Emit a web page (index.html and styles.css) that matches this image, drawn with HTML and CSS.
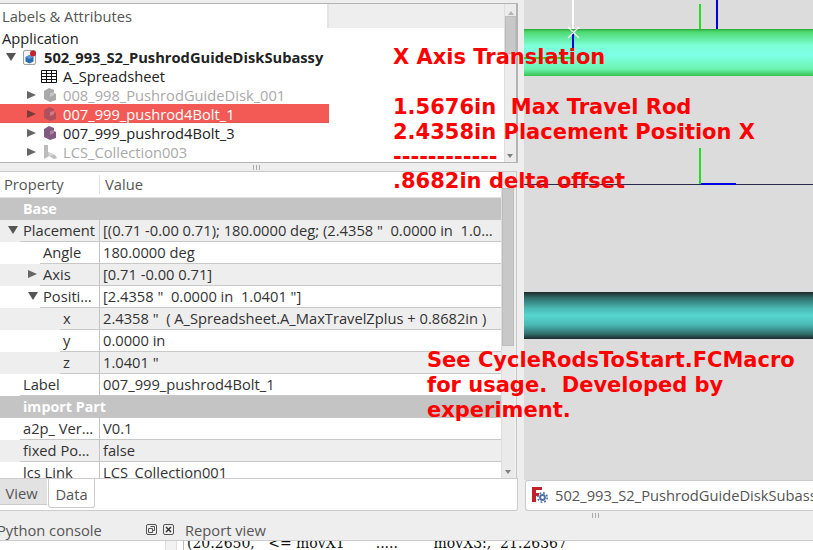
FILE: index.html
```html
<!DOCTYPE html>
<html lang="en">
<head>
<meta charset="utf-8">
<title>FreeCAD</title>
<link rel="stylesheet" href="styles.css">
</head>
<body>
<div class="app">
  <div class="top">
    <aside class="left-pane">
      <section class="tree-frame">
        <div class="tree-main">
          <div class="tree-head"><div class="tree-head-cell">Labels &amp; Attributes</div></div>
          <div class="tree-body">
            <div class="trow"><span class="tlabel">Application</span></div>
            <div class="trow l1">
              <span class="arrow a-down"></span>
              <svg class="ico" viewBox="0 0 16 16"><rect x="1.500" y="1.500" width="12" height="14" rx="1.500" fill="#f6f6f6" stroke="#a0a0a0"/><path d="M3.500 8l4-2 4 2v4.500l-4 2-4-2z" fill="#2c6cb0"/><path d="M3.500 8l4 2 4-2-4-2z" fill="#5a98d6"/><circle cx="11" cy="4.500" r="3" fill="#c6202c"/></svg>
              <span class="tlabel bold">502_993_S2_PushrodGuideDiskSubassy</span>
            </div>
            <div class="trow l2">
              <svg class="ico" viewBox="0 0 16 16"><path d="M.5 2.500h15v12H.5zM.5 5.500h15M.5 8.500h15M.5 11.500h15M5.500 2.500v12M10.500 2.500v12" fill="none" stroke="#111"/></svg>
              <span class="tlabel">A_Spreadsheet</span>
            </div>
            <div class="trow l3 muted">
              <span class="arrow a-right"></span>
              <svg class="ico part" viewBox="0 0 14 16"><path d="M1 4l5-3 5 2v3l2 1v6l-6 2-6-3z" fill="#a9a9a9"/><path d="M7 6l4-1v3l2-1-6 3z" fill="#c6c6c6"/></svg>
              <span class="tlabel">008_998_PushrodGuideDisk_001</span>
            </div>
            <div class="trow l3 selected">
              <span class="arrow a-right"></span>
              <svg class="ico part" viewBox="0 0 14 16"><path d="M1 4l5-3 5 2v3l2 1v6l-6 2-6-3z" fill="#b0505e"/><path d="M7 6l4-1v3l2-1-6 3z" fill="#d37c86"/></svg>
              <span class="tlabel">007_999_pushrod4Bolt_1</span>
            </div>
            <div class="trow l3">
              <span class="arrow a-right"></span>
              <svg class="ico part" viewBox="0 0 14 16"><path d="M1 4l5-3 5 2v3l2 1v6l-6 2-6-3z" fill="#825a80"/><path d="M7 6l4-1v3l2-1-6 3z" fill="#a884a6"/></svg>
              <span class="tlabel">007_999_pushrod4Bolt_3</span>
            </div>
            <div class="trow l3 muted">
              <span class="arrow a-right"></span>
              <svg class="ico part" viewBox="0 0 16 16"><path d="M2 1h4v7l7 3 2 3-3 1-5-3-5 3z" fill="#bcbcbc"/><path d="M6 8l7 3-6 1z" fill="#d8d8d8"/></svg>
              <span class="tlabel">LCS_Collection003</span>
            </div>
          </div>
        </div>
        <div class="vbar"><span class="up"></span><span class="thumb tree-thumb"></span><span class="corner"></span></div>
      </section>
      <div class="hsplit"><span class="grip"></span></div>
      <section class="prop-frame">
        <div class="prop-main">
          <div class="prop-head"><div class="ph1">Property</div><div class="ph2">Value</div></div>
          <div class="prop-body">
            <div class="group">Base</div>
            <div class="prow alt"><div class="pname i1"><span class="arrow a-down pa"></span>Placement</div><div class="pval">[(0.71 -0.00 0.71); 180.0000 deg; (2.4358 "&nbsp; 0.0000 in&nbsp; 1.0…</div></div>
            <div class="prow"><div class="pname i2">Angle</div><div class="pval">180.0000 deg</div></div>
            <div class="prow alt"><div class="pname i2"><span class="arrow a-right pa"></span>Axis</div><div class="pval">[0.71 -0.00 0.71]</div></div>
            <div class="prow"><div class="pname i2"><span class="arrow a-down pa"></span>Positi…</div><div class="pval">[2.4358 "&nbsp; 0.0000 in&nbsp; 1.0401 "]</div></div>
            <div class="prow alt"><div class="pname i3">x</div><div class="pval">2.4358 "&nbsp; ( A_Spreadsheet.A_MaxTravelZplus + 0.8682in )</div></div>
            <div class="prow"><div class="pname i3">y</div><div class="pval">0.0000 in</div></div>
            <div class="prow alt"><div class="pname i3">z</div><div class="pval">1.0401 "</div></div>
            <div class="prow"><div class="pname i1">Label</div><div class="pval">007_999_pushrod4Bolt_1</div></div>
            <div class="group">import Part</div>
            <div class="prow"><div class="pname i1">a2p_ Ver…</div><div class="pval">V0.1</div></div>
            <div class="prow alt"><div class="pname i1">fixed Po…</div><div class="pval">false</div></div>
            <div class="prow"><div class="pname i1">lcs Link</div><div class="pval">LCS_Collection001</div></div>
          </div>
        </div>
        <div class="vbar pbar"><span class="thumb prop-thumb"></span><span class="corner"></span></div>
      </section>
      <div class="tabs">
        <div class="tab">View</div>
        <div class="tab active">Data</div>
      </div>
    </aside>
    <main class="right-pane">
      <div class="viewport">
        <span class="axis green a1"></span><span class="axis blue a2"></span><span class="axis white a3"></span><span class="axis blue a4"></span>
        <span class="rod rod-green"></span>
        <span class="hline green h1"></span>
        <span class="baseline"></span>
        <span class="axis green a5"></span><span class="hline blue h2"></span>
        <span class="rod rod-teal"></span>
        <svg class="cross" viewBox="0 0 13 13"><path d="M1 1l11 11M12 1L1 12" stroke="#fff" stroke-width="1.200"/></svg>
      </div>
      <div class="doc-tabs">
        <div class="doc-tab">
          <svg class="fc" viewBox="0 0 16 16"><path d="M0 0h10v3H4v3h3v3H4v6H0z" fill="#c4202a"/><circle cx="10.500" cy="10.500" r="3.400" fill="#4a70a8"/><circle cx="10.500" cy="10.500" r="4.700" fill="none" stroke="#4a70a8" stroke-width="1.600" stroke-dasharray="1.800 1.900"/><circle cx="10.500" cy="10.500" r="1.400" fill="#fff"/></svg>
          <span>502_993_S2_PushrodGuideDiskSubassy</span>
        </div>
      </div>
      <div class="hsplit low"><span class="grip"></span></div>
    </main>
  </div>
  <div class="dock">
    <span class="dock-title">Python console</span>
    <svg class="dock-btn" viewBox="0 0 11 11"><rect x=".5" y=".5" width="10" height="10" rx="1.500" fill="none" stroke="#555"/><path d="M4.500 2.500h4v4h-2M2.500 4.500h4v4h-4z" fill="none" stroke="#555"/></svg>
    <svg class="dock-btn" viewBox="0 0 11 11"><rect x=".5" y=".5" width="10" height="10" rx="1.500" fill="none" stroke="#555"/><path d="M3 3l5 5M8 3l-5 5" stroke="#333" stroke-width="1.500"/></svg>
    <span class="dock-title rep">Report view</span>
  </div>
  <div class="console">
    <div class="console-left"><span class="console-bar"></span></div>
    <div class="console-text">(20.2650,   &lt;= movX1       .....        movX3:,  21.26367</div>
  </div>
</div>
<div class="note n1">X Axis Translation</div>
<div class="note n2">1.5676in&nbsp; Max Travel Rod<br>2.4358in Placement Position X<br>------------</div>
<div class="note n3">.8682in delta offset</div>
<div class="note n4">See CycleRodsToStart.FCMacro<br>for usage.&nbsp; Developed by<br>experiment.</div>
</body>
</html>
```
FILE: styles.css
```css
* { box-sizing: border-box; }
html, body { margin: 0; padding: 0; }
body { width: 813px; height: 550px; overflow: hidden; position: relative; background: #eeeeee; font-family: "Open Sans", "Noto Sans", sans-serif; font-size: 14.700px; color: #3c3c3c; }
.app { display: flex; flex-direction: column; height: 550px; }
.top { display: flex; height: 511px; flex: none; }
.left-pane { width: 518px; flex: none; display: flex; flex-direction: column; padding-top: 3px; }
.right-pane { flex: 1; min-width: 0; margin-left: 6px; display: flex; flex-direction: column; }

.tree-frame { height: 160px; flex: none; display: flex; border: 1px solid #b4b4b4; border-left: none; border-right-width: 2px; background: #fff; }
.tree-main { flex: 1; min-width: 0; overflow: hidden; }
.tree-head { height: 24px; background: #eeeeee; }
.tree-head-cell { width: 329px; height: 24px; background: #fff; padding: 2px 0 0 2px; border-right: 2px solid #e4e4e4; line-height: 21px; color: #555; }
.trow { height: 19px; width: 329px; display: flex; align-items: center; color: #222; white-space: nowrap; }
.tlabel { margin-left: 2px; }
.bold { font-weight: 700; margin-left: 2px; color: #222; }
.l1 { padding-left: 6px; }
.l2 { padding-left: 41px; }
.l3 { padding-left: 27px; }
.ico { width: 16px; height: 16px; flex: none; margin-right: 4px; }
.l1 .ico { margin-left: 6px; margin-right: 4px; }
.part { margin-left: 6px; margin-right: 3px; }
.muted { color: #a9a9a9; }
.selected { background: #f45a55; color: #fff; box-shadow: inset 0 -1px #e45450; }
.arrow { display: inline-block; width: 0; height: 0; flex: none; }
.a-down { border-left: 5px solid transparent; border-right: 5px solid transparent; border-top: 8px solid #555; }
.a-right { border-top: 4px solid transparent; border-bottom: 4px solid transparent; border-left: 9px solid #666; }
.selected .a-right { border-left-color: #7a3c3a; }

.vbar { width: 12px; flex: none; background: #ececec; border-left: 1px solid #dedede; position: relative; display: flex; flex-direction: column; }
.up { position: absolute; left: 3px; top: 7px; border-left: 3px solid transparent; border-right: 3px solid transparent; border-bottom: 4px solid #b5b5b5; }
.thumb { display: block; background: #c8c8c8; border: 1px solid #bdbdbd; }
.tree-thumb { margin-top: 12px; height: 38px; }
.corner { position: absolute; right: 3px; bottom: 4px; border-left: 3px solid transparent; border-right: 3px solid transparent; border-top: 4px solid #808080; }

.hsplit { height: 8px; flex: none; display: flex; align-items: center; padding-left: 253px; }
.grip { width: 7px; height: 5px; background: repeating-linear-gradient(90deg, #aaa 0 1px, transparent 1px 3px); }

.prop-frame { flex: 1; min-height: 0; width: 517px; display: flex; border-top: 1px solid #c8c8c8; border-right: 1px solid #c8c8c8; padding-right: 2px; background: #eee; }
.prop-main { flex: 1; min-width: 0; overflow: hidden; background: #fff; }
.prop-head { display: flex; height: 26px; background: #fff; border-bottom: 1px solid #e0e0e0; color: #555; line-height: 25px; }
.ph1 { width: 99px; padding-left: 4px; }
.ph2 { padding-left: 5px; border-left: 1px solid #e0e0e0; height: 19px; margin-top: 3px; line-height: 19px; }
.group { height: 22px; background: #c4c4c4; color: #fff; font-weight: 700; padding-left: 23px; line-height: 22px; font-size: 14.300px; }
.prow { display: flex; height: 22px; line-height: 21px; background: #fff; white-space: nowrap; color: #333; }
.prow.alt { background: #eeeeee; }
.pname { width: 100px; flex: none; position: relative; border-right: 1px solid #c4c4c4; overflow: hidden; }
.pname::after { content: ""; position: absolute; bottom: 0; right: 0; height: 1px; background: #c8c8c8; }
.i1 { padding-left: 23px; }
.i1::after { left: 20px; }
.i2 { padding-left: 43px; }
.i2::after { left: 40px; }
.i3 { padding-left: 63px; }
.i3::after { left: 60px; }
.pa { position: absolute; top: 6px; }
.i1 .pa { left: 8px; }
.i2 .pa { left: 28px; }
.pval { flex: 1; min-width: 0; padding-left: 3px; border-bottom: 1px solid #c8c8c8; overflow: hidden; }
.pbar { background: #eaeaea; width: 13px; }
.prop-thumb { height: 158px; margin-top: 16px; }

.tabs { height: 33px; flex: none; display: flex; background: #fff; border: 1px solid #ccc; border-left: none; border-radius: 0 0 3px 0; }
.tab { width: 47px; height: 26px; background: #e2e2e2; text-align: center; line-height: 28px; color: #555; border-bottom: 1px solid #ccc; padding-right: 4px; }
.tab.active { width: 47px; height: 29px; padding: 0; background: #fff; border: 1px solid #ccc; border-top: none; border-radius: 0 0 3px 3px; margin-left: 1px; line-height: 31px; }

.viewport { height: 480px; flex: none; background: #dcdcdc; position: relative; overflow: hidden; }
.rod { position: absolute; left: 0; right: 0; height: 47px; }
.rod-green { top: 29px; background: linear-gradient(#27a83a 0, #4fd870 6%, #7dffd8 35%, #7dffe8 55%, #6cf5b0 85%, #38c050 100%); }
.rod-teal { top: 292px; background: linear-gradient(#1c2a2a 0, #2e6a68 12%, #4bb8b4 35%, #55d6d0 50%, #4bb8b4 70%, #2e6a68 90%, #1c2a2a 100%); }
.axis { position: absolute; width: 2px; }
.green { background: #1fe01f; }
.blue { background: #0000e0; }
.white { background: #fff; }
.a1 { left: 175px; top: 4px; height: 25px; }
.a2 { left: 192px; top: 0; height: 29px; }
.a3 { left: 48px; top: 0; height: 32px; }
.a4 { left: 48px; top: 32px; height: 18px; z-index: 2; }
.a5 { left: 175px; top: 148px; height: 36px; }
.hline { position: absolute; height: 2px; }
.h1 { left: 0; top: 57px; width: 47px; z-index: 2; }
.h2 { left: 177px; top: 183px; width: 35px; }
.baseline { position: absolute; left: 0; right: 0; top: 184px; height: 1px; background: #2a2a50; }
.cross { position: absolute; left: 43px; top: 26px; width: 13px; height: 13px; z-index: 3; }

.doc-tabs { height: 31px; flex: none; padding-left: 1px; }
.doc-tab { height: 31px; background: #fff; border: 1px solid #ccc; border-right: none; border-radius: 3px 0 0 3px; display: flex; align-items: center; padding-left: 6px; white-space: nowrap; overflow: hidden; color: #555; padding-bottom: 1px; }
.fc { width: 16px; height: 16px; margin-right: 7px; flex: none; }
.low { height: 6px; padding-left: 68px; margin-top: 1px; }

.dock { height: 29px; flex: none; display: flex; align-items: center; color: #555; padding-top: 8px; white-space: nowrap; }
.dock-title { width: 149px; margin-left: -3px; flex: none; }
.dock-btn { width: 11px; height: 11px; margin-right: 6px; flex: none; }
.dock-title.rep { margin-left: 5px; }
.console { flex: 1; display: flex; background: #fff; overflow: hidden; min-height: 0; }
.console-left { width: 184px; flex: none; border-right: 1px solid #bbb; border-top: 1px solid #ccc; position: relative; }
.console-bar { position: absolute; left: 165px; top: 0; width: 12px; height: 10px; background: #f2f2f2; border-left: 1px solid #ddd; border-right: 1px solid #ddd; }
.console-text { flex: 1; border-top: 1px solid #ccc; padding-left: 3px; font-family: "DejaVu Serif", serif; font-size: 14px; line-height: 4px; color: #111; white-space: pre; overflow: hidden; }

.note { position: absolute; z-index: 5; font-family: "DejaVu Sans", sans-serif; font-weight: 700; font-size: 21px; line-height: 25px; color: #ff0000; white-space: nowrap; }
.n1 { left: 393px; top: 45px; }
.n2 { left: 393px; top: 95px; }
.n3 { left: 393px; top: 169px; }
.n4 { left: 427px; top: 348px; }
```
